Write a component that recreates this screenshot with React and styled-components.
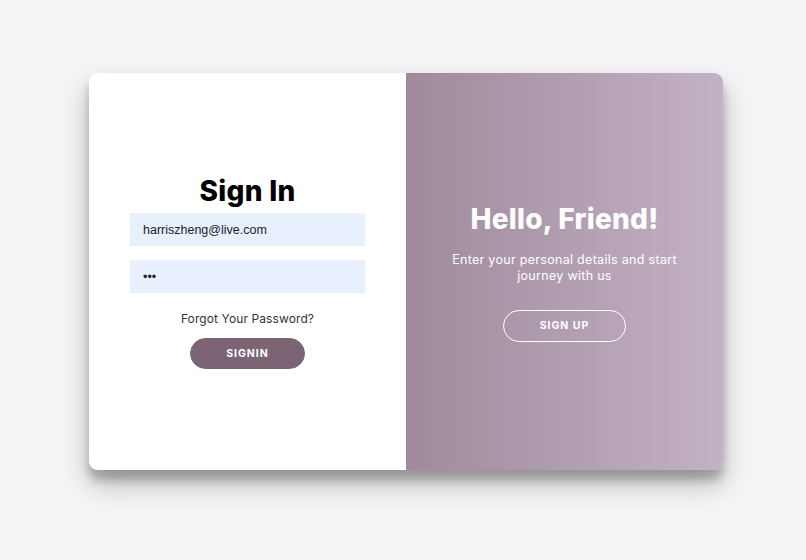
import React from "react";
import styled, { createGlobalStyle } from "styled-components";

const GlobalStyle = createGlobalStyle`
  * {
    box-sizing: border-box;
  }
  body {
    margin: 0;
    background: #f5f5f7;
    font-family: Inter, "Liberation Sans", sans-serif;
  }
`;

const Page = styled.div`
  width: 806px;
  height: 560px;
  padding: 73px 0 0 89px;
`;

const Card = styled.div`
  width: 634px;
  height: 397px;
  display: flex;
  border-radius: 9px;
  overflow: hidden;
  background: #fff;
  box-shadow: 0 14px 28px rgba(0, 0, 0, 0.25), 0 10px 10px rgba(0, 0, 0, 0.22);
`;

const Panel = styled.div`
  flex: 1;
  display: flex;
  flex-direction: column;
  align-items: center;
  justify-content: center;
  text-align: center;
  padding: 0 41px;
  background: ${({ $overlay }) =>
    $overlay ? "linear-gradient(to right, #a08a9c, #c3b1c5)" : "#fff"};
  color: ${({ $overlay }) => ($overlay ? "#fff" : "#000")};
`;

const Title = styled.h1`
  margin: 0;
  font-family: Inter, "DejaVu Sans", sans-serif;
  font-weight: 800;
  font-size: 28px;
  line-height: 34px;
  letter-spacing: 0.3px;
`;

const Input = styled.input`
  width: 100%;
  height: 33px;
  border: none;
  outline: none;
  background: #e8f0fe;
  padding: 0 13px;
  margin-top: ${({ $first }) => ($first ? "5px" : "14px")};
  font-family: "Liberation Sans", Arial, sans-serif;
  font-size: 12.5px;
  color: #222;
`;

const Link = styled.a`
  margin: 18px 0 11px;
  font-size: 12px;
  line-height: 16px;
  letter-spacing: 0.1px;
  color: #333;
  text-decoration: none;
`;

const Text = styled.p`
  margin: 16px 0 26px;
  font-size: 12.5px;
  line-height: 16px;
  letter-spacing: 0.3px;
  font-weight: 400;
`;

const Button = styled.button`
  width: ${({ $w }) => $w}px;
  height: ${({ $ghost }) => ($ghost ? "32px" : "31px")};
  border-radius: 20px;
  border: 1px solid ${({ $ghost }) => ($ghost ? "#fff" : "#7d6475")};
  background: ${({ $ghost }) => ($ghost ? "transparent" : "#7d6475")};
  color: #fff;
  font-family: Inter, sans-serif;
  font-weight: 700;
  font-size: 10.5px;
  letter-spacing: 1px;
  text-transform: uppercase;
  cursor: pointer;
`;

export default function App() {
  return (
    <>
      <GlobalStyle />
      <Page>
        <Card>
          <Panel>
            <Title>Sign In</Title>
            <Input $first type="email" defaultValue="harriszheng@live.com" />
            <Input type="password" defaultValue="abc" />
            <Link href="#">Forgot Your Password?</Link>
            <Button $w={115}>Signin</Button>
          </Panel>
          <Panel $overlay>
            <Title>Hello, Friend!</Title>
            <Text>Enter your personal details and start journey with us</Text>
            <Button $ghost $w={123}>Sign Up</Button>
          </Panel>
        </Card>
      </Page>
    </>
  );
}
